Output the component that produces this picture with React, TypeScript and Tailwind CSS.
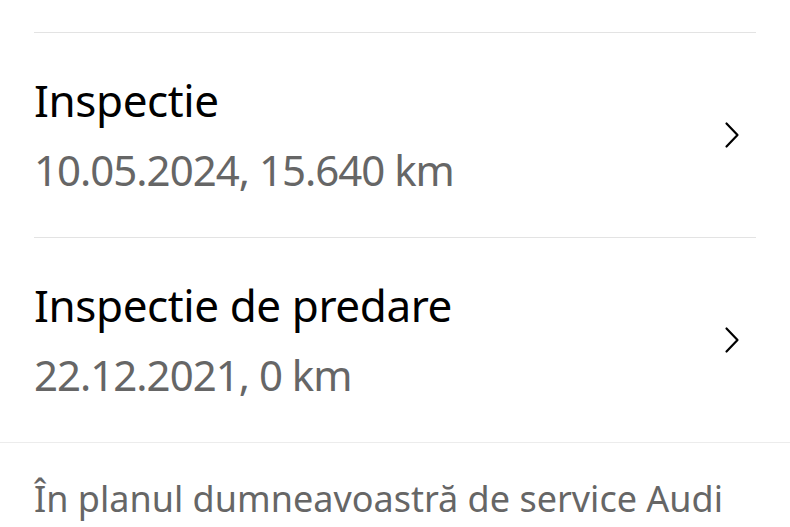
import React from 'react';

interface ServiceEntry {
  title: string;
  detail: string;
}

const entries: ServiceEntry[] = [
  { title: 'Inspectie', detail: '10.05.2024, 15.640 km' },
  { title: 'Inspectie de predare', detail: '22.12.2021, 0 km' }
];

const Chevron: React.FC = () => (
  <svg width="16" height="28" viewBox="0 0 16 28" fill="none" className="shrink-0">
    <path d="M2.5 2.5 L13.5 14 L2.5 25.5" stroke="#000" strokeWidth="2.2" strokeLinecap="round" strokeLinejoin="round" />
  </svg>
);

const App: React.FC = () => {
  return <div className="w-[790px] h-[527px] overflow-hidden bg-white" style={{ fontFamily: '"Noto Sans", "Open Sans", sans-serif' }}>
      <div className="pt-[32px] px-[34px]">
        {entries.map(entry => <div key={entry.title} className="flex items-center justify-between border-t border-[#e3e3e3] h-[205px]">
            <div className="flex flex-col">
              <span className="text-[44px] leading-[60px] text-black tracking-[-0.4px]">{entry.title}</span>
              <span className="text-[42px] leading-[60px] text-[#666666] tracking-[-1px] mt-[10px]">{entry.detail}</span>
            </div>
            <div className="pr-[16px]">
              <Chevron />
            </div>
          </div>)}
      </div>
      <div className="border-t border-[#ececec] pt-[34px] px-[34px]">
        <p className="text-[36px] leading-[44px] text-[#666666] whitespace-nowrap">
          În planul dumneavoastră de service Audi
        </p>
      </div>
    </div>;
};

export default App;
